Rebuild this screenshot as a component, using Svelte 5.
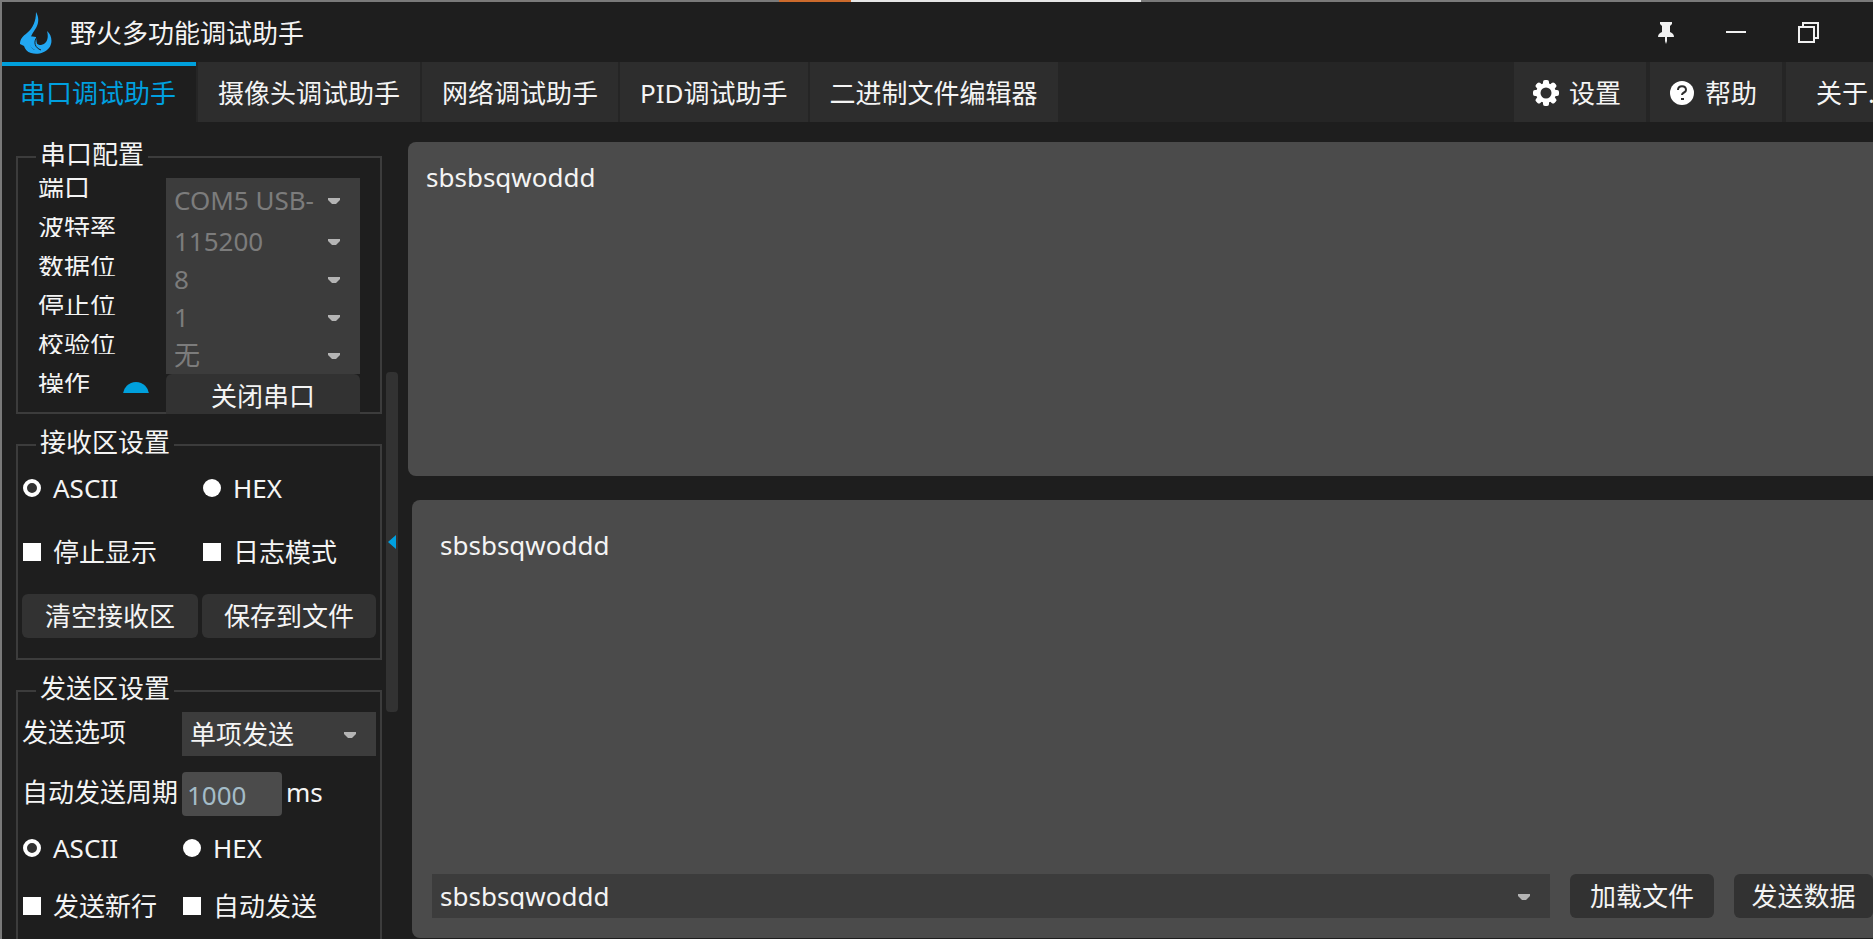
<script>
  const tabs = ['串口调试助手', '摄像头调试助手', '网络调试助手', 'PID调试助手', '二进制文件编辑器'];

  const portFields = [
    { id: 'port', label: '端口', value: 'COM5 USB-' },
    { id: 'baud', label: '波特率', value: '115200' },
    { id: 'data-bits', label: '数据位', value: '8' },
    { id: 'stop-bits', label: '停止位', value: '1' },
    { id: 'parity', label: '校验位', value: '无' }
  ];

  let activeTab = $state(0);
  let receiveFormat = $state('ASCII');
  let sendFormat = $state('ASCII');
  let received = $state('sbsbsqwoddd');
  let message = $state('sbsbsqwoddd');
  let period = $state('1000');
</script>

{#snippet arrow()}
  <svg class="arrow" width="12" height="6" viewBox="0 0 12 6" aria-hidden="true">
    <path d="M0 0H12V2L8 6H4L0 2Z" fill="#b4b4b4" />
  </svg>
{/snippet}

<div class="window">
  <div class="edge"><span class="edge-orange"></span><span class="edge-light"></span></div>

  <header class="titlebar">
    <svg class="logo" width="34" height="42" viewBox="0 0 34 42" aria-hidden="true">
      <path d="M17 0C20 5 20 11 17 16C14 21 11 24 11 30C11 34 13 37 16 38C13 33 13 29 17 25C16 31 18 33 22 33C28 32 30 26 28 19C33 23 34 31 30 36C26 41 18 43 12 41C8 40 6 37 5 34L1 32C1 27 4 24 8 21C14 16 17 9 17 0Z" fill="#22a7f2" />
      <path d="M10 24C9 31 11 36 16 38L18 33L17 25Z" fill="#22a7f2" />
      <path d="M18 25C14 30 16 36 22 38" fill="none" stroke="#1e1e1e" stroke-width="1" />
    </svg>
    <h1>野火多功能调试助手</h1>
    <div class="window-buttons">
      <button aria-label="置顶">
        <svg width="16" height="22" viewBox="0 0 16 22"><path d="M2 0H14V2L12 4V10C14 11 16 12 16 15H9V19L8 22L7 19V15H0C0 12 2 11 4 10V4L2 2Z" fill="#f0f0f0" /></svg>
      </button>
      <button aria-label="最小化">
        <svg width="20" height="22" viewBox="0 0 20 22"><path d="M0 10H20" stroke="#f0f0f0" stroke-width="2" /></svg>
      </button>
      <button aria-label="还原">
        <svg width="22" height="22" viewBox="0 0 22 22" fill="none" stroke="#f0f0f0" stroke-width="2"><path d="M1 5H16V20H1ZM5 5V1H20V16H16" /></svg>
      </button>
    </div>
  </header>

  <nav>
    {#each tabs as tab, i}
      <button class="tab" class:active={i === activeTab} onclick={() => (activeTab = i)}>{tab}</button>
    {/each}
    <div class="tools">
      <button class="tool">
        <svg width="26" height="26" viewBox="0 0 26 26" aria-hidden="true">
          <g fill="#fff">
            {#each [0, 45, 90, 135] as angle}
              <rect x="10" y="0" width="6" height="26" rx="2" transform="rotate({angle} 13 13)" />
            {/each}
            <circle cx="13" cy="13" r="10" />
          </g>
          <circle cx="13" cy="13" r="5.5" fill="#2d2d2d" />
        </svg>
        设置
      </button>
      <button class="tool">
        <svg width="26" height="26" viewBox="0 0 26 26" aria-hidden="true">
          <circle cx="13" cy="13" r="12" fill="#fff" />
          <path d="M9 10C9 5 17 5 17 10C17 13 13 12 13 15" fill="none" stroke="#2d2d2d" stroke-width="2" />
          <rect x="12" y="18" width="3" height="2" fill="#2d2d2d" />
        </svg>
        帮助
      </button>
      <button class="tool about">关于...</button>
    </div>
  </nav>

  <main>
    <aside>
      <fieldset class="port">
        <legend>串口配置</legend>
        <div class="port-grid">
          <div class="port-labels">
            {#each portFields as field}
              <label for={field.id}>{field.label}</label>
            {/each}
            <div class="status"><span>操作</span><i></i></div>
          </div>
          <div class="port-values">
            {#each portFields as field}
              <div class="combo">
                <select id={field.id} disabled><option>{field.value}</option></select>
                {@render arrow()}
              </div>
            {/each}
            <button class="btn close-port">关闭串口</button>
          </div>
        </div>
      </fieldset>

      <fieldset class="receive">
        <legend>接收区设置</legend>
        <div class="options">
          <label><input type="radio" name="receive" value="ASCII" bind:group={receiveFormat} />ASCII</label>
          <label><input type="radio" name="receive" value="HEX" bind:group={receiveFormat} />HEX</label>
        </div>
        <div class="options">
          <label><input type="checkbox" />停止显示</label>
          <label><input type="checkbox" />日志模式</label>
        </div>
        <div class="actions">
          <button class="btn">清空接收区</button>
          <button class="btn">保存到文件</button>
        </div>
      </fieldset>

      <fieldset class="send">
        <legend>发送区设置</legend>
        <div class="row">
          <label for="send-mode">发送选项</label>
          <div class="combo">
            <select id="send-mode"><option>单项发送</option></select>
            {@render arrow()}
          </div>
        </div>
        <div class="row">
          <label for="period">自动发送周期</label>
          <input id="period" type="text" bind:value={period} />
          <span>ms</span>
        </div>
        <div class="options">
          <label><input type="radio" name="send" value="ASCII" bind:group={sendFormat} />ASCII</label>
          <label><input type="radio" name="send" value="HEX" bind:group={sendFormat} />HEX</label>
        </div>
        <div class="options">
          <label><input type="checkbox" />发送新行</label>
          <label><input type="checkbox" />自动发送</label>
        </div>
      </fieldset>
    </aside>

    <button class="splitter" aria-label="收起侧栏">
      <svg width="8" height="14" viewBox="0 0 8 14"><path d="M8 0V14L0 7Z" fill="#00a0e0" /></svg>
    </button>

    <div class="panels">
      <textarea class="output" aria-label="接收区" readonly bind:value={received}></textarea>
      <section class="composer">
        <textarea aria-label="发送区" bind:value={message}></textarea>
        <div class="send-bar">
          <div class="combo">
            <select aria-label="历史记录"><option>sbsbsqwoddd</option></select>
            {@render arrow()}
          </div>
          <button class="btn">加载文件</button>
          <button class="btn">发送数据</button>
        </div>
      </section>
    </div>
  </main>
</div>

<style>
  :global(body) {
    margin: 0;
    background: #1e1e1e;
  }

  * {
    box-sizing: border-box;
  }

  .window {
    display: flex;
    flex-direction: column;
    height: 100vh;
    overflow: hidden;
    border-left: 2px solid #7a7a7a;
    background: #1e1e1e;
    color: #f4f4f4;
    font-family: 'Noto Sans', 'Noto Sans CJK SC', sans-serif;
    font-size: 26px;
    line-height: 26px;
  }

  button,
  input,
  select,
  textarea {
    margin: 0;
    padding: 0;
    border: none;
    outline: none;
    background: none;
    color: inherit;
    font: inherit;
  }

  button {
    white-space: nowrap;
  }

  svg {
    display: block;
    flex-shrink: 0;
  }

  .edge {
    display: grid;
    grid-template-columns: 777fr 72fr 290fr 732fr;
    flex-shrink: 0;
    height: 2px;
    background: #7a7a7a;
  }

  .edge-orange {
    grid-column: 2;
    background: #cc6a2c;
  }

  .edge-light {
    background: #e6e6e6;
  }

  .titlebar {
    display: flex;
    align-items: center;
    flex-shrink: 0;
    height: 60px;
    padding: 2px 53px 0 17px;
  }

  h1 {
    margin: 0 0 0 17px;
    font: inherit;
  }

  .window-buttons {
    display: flex;
    gap: 52px;
    margin-left: auto;
  }

  nav {
    display: flex;
    gap: 2px;
    flex-shrink: 0;
    height: 60px;
    background: #252525;
  }

  .tab {
    padding: 2px 20px 0;
    background: #2d2d2d;
  }

  .tab.active {
    padding: 2px 20px 0 18px;
    background: linear-gradient(#00a0dc 4px, #1e1e1e 4px);
    color: #00a0e0;
  }

  .tools {
    display: flex;
    gap: 4px;
    margin-left: auto;
  }

  .tool {
    display: flex;
    align-items: center;
    gap: 10px;
    width: 132px;
    padding: 2px 0 0 19px;
    background: #2d2d2d;
  }

  .about {
    width: 87px;
    padding-left: 30px;
    overflow: hidden;
  }

  main {
    display: flex;
    flex: 1;
    min-height: 0;
  }

  aside {
    display: flex;
    flex-direction: column;
    gap: 15px;
    width: 380px;
    flex-shrink: 0;
    padding: 19px 0 0 14px;
  }

  fieldset {
    min-width: 0;
    margin: 0;
    padding: 5px 4px 0;
    border: 2px solid #3c3c3c;
  }

  legend {
    margin-left: 14px;
    padding: 0 4px 6px;
  }

  .port {
    height: 273px;
  }

  .port-grid {
    display: grid;
    grid-template-columns: 111px 194px;
    column-gap: 17px;
    padding: 0 16px;
  }

  .port-labels {
    display: flex;
    flex-direction: column;
    gap: 19px;
  }

  .port-labels label,
  .status {
    height: 20px;
    line-height: 20px;
    overflow: hidden;
  }

  .status {
    display: flex;
    justify-content: space-between;
  }

  .status i {
    width: 26px;
    height: 26px;
    margin-top: 9px;
    border-radius: 50%;
    background: #00a0dc;
  }

  .port-values {
    display: grid;
    grid-template-rows: 44px repeat(4, 38px) 40px;
  }

  .combo {
    position: relative;
    height: 44px;
    background: #3c3c3c;
  }

  .port-values .combo {
    height: auto;
  }

  select {
    display: block;
    width: 100%;
    height: 100%;
    padding: 0 36px 0 8px;
    appearance: none;
    opacity: 1;
  }

  select:disabled {
    color: #7c7c7c;
  }

  .arrow {
    position: absolute;
    top: calc(50% - 2px);
    right: 20px;
    pointer-events: none;
  }

  .btn {
    height: 44px;
    border-radius: 6px;
    background: #323232;
  }

  .close-port {
    height: 40px;
    padding-top: 4px;
    border-radius: 6px 6px 0 0;
  }

  .receive {
    padding: 11px 4px 20px;
  }

  .options {
    display: grid;
    grid-template-columns: 180px 1fr;
    height: 32px;
  }

  .options + .options {
    margin-top: 32px;
  }

  .options label {
    display: flex;
    align-items: center;
    gap: 12px;
    padding-left: 1px;
  }

  .options input {
    width: 18px;
    height: 18px;
    flex-shrink: 0;
    appearance: none;
    background: #fff;
  }

  .options input[type='radio'] {
    border-radius: 50%;
  }

  .options input[type='radio']:checked {
    border: 4px solid #fff;
    background: #323232;
  }

  .options input[type='checkbox']:checked {
    border: 4px solid #fff;
    background: #00a0dc;
  }

  .actions {
    display: grid;
    grid-template-columns: 176px 174px;
    gap: 4px;
    margin-top: 26px;
  }

  .send {
    flex: 1;
    border-bottom: none;
  }

  .row {
    display: grid;
    grid-template-columns: 156px 100px 1fr;
    align-items: center;
    column-gap: 4px;
    height: 44px;
    margin-bottom: 16px;
    white-space: nowrap;
  }

  .row label,
  .row span {
    padding-bottom: 4px;
  }

  .row .combo {
    grid-column: 2 / 4;
  }

  #period {
    width: 100%;
    height: 44px;
    padding: 2px 5px 0;
    border-radius: 4px;
    background: #4b4b4b;
    color: #a4bcc8;
  }

  .send .options {
    grid-template-columns: 160px 1fr;
  }

  .send .options + .options {
    margin-top: 26px;
  }

  .splitter {
    display: flex;
    align-items: center;
    justify-content: center;
    align-self: center;
    flex-shrink: 0;
    width: 12px;
    height: 340px;
    margin: 22px 10px 0 4px;
    border-radius: 4px;
    background: #323232;
  }

  .panels {
    display: grid;
    grid-template-rows: 16fr 21fr;
    gap: 24px;
    flex: 1;
    min-width: 0;
    padding: 20px 0 1px;
  }

  textarea {
    display: block;
    width: 100%;
    resize: none;
  }

  .output {
    padding: 22px 18px;
    border-radius: 8px 0 0 8px;
    background: #4b4b4b;
  }

  .composer {
    display: flex;
    flex-direction: column;
    margin-left: 4px;
    border-radius: 8px 0 0 8px;
    background: #4b4b4b;
  }

  .composer textarea {
    flex: 1;
    padding: 32px 28px;
  }

  .send-bar {
    display: grid;
    grid-template-columns: 1fr 144px 139px;
    gap: 20px;
    padding: 0 0 20px 20px;
  }
</style>
